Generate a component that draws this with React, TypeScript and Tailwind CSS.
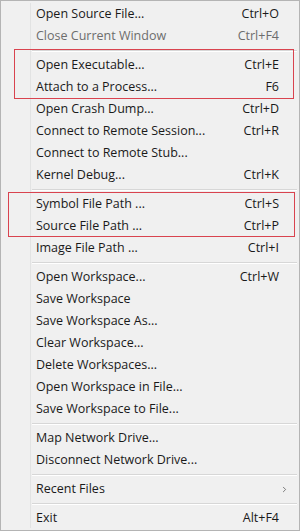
import { ChevronRight } from 'lucide-react'

type Item =
  | { kind: 'sep' }
  | { kind: 'item'; label: string; shortcut?: string; disabled?: boolean; submenu?: boolean }

const items: Item[] = [
  { kind: 'item', label: 'Open Source File...', shortcut: 'Ctrl+O' },
  { kind: 'item', label: 'Close Current Window', shortcut: 'Ctrl+F4', disabled: true },
  { kind: 'sep' },
  { kind: 'item', label: 'Open Executable...', shortcut: 'Ctrl+E' },
  { kind: 'item', label: 'Attach to a Process...', shortcut: 'F6' },
  { kind: 'item', label: 'Open Crash Dump...', shortcut: 'Ctrl+D' },
  { kind: 'item', label: 'Connect to Remote Session...', shortcut: 'Ctrl+R' },
  { kind: 'item', label: 'Connect to Remote Stub...' },
  { kind: 'item', label: 'Kernel Debug...', shortcut: 'Ctrl+K' },
  { kind: 'sep' },
  { kind: 'item', label: 'Symbol File Path ...', shortcut: 'Ctrl+S' },
  { kind: 'item', label: 'Source File Path ...', shortcut: 'Ctrl+P' },
  { kind: 'item', label: 'Image File Path ...', shortcut: 'Ctrl+I' },
  { kind: 'sep' },
  { kind: 'item', label: 'Open Workspace...', shortcut: 'Ctrl+W' },
  { kind: 'item', label: 'Save Workspace' },
  { kind: 'item', label: 'Save Workspace As...' },
  { kind: 'item', label: 'Clear Workspace...' },
  { kind: 'item', label: 'Delete Workspaces...' },
  { kind: 'item', label: 'Open Workspace in File...' },
  { kind: 'item', label: 'Save Workspace to File...' },
  { kind: 'sep' },
  { kind: 'item', label: 'Map Network Drive...' },
  { kind: 'item', label: 'Disconnect Network Drive...' },
  { kind: 'sep' },
  { kind: 'item', label: 'Recent Files', submenu: true },
  { kind: 'sep' },
  { kind: 'item', label: 'Exit', shortcut: 'Alt+F4' },
]

export default function App() {
  return (
    <div className="relative w-[301px] h-[532px] bg-white font-['Open_Sans',sans-serif] text-[12.5px]">
      <div className="relative w-[300px] h-[531px] border border-[#b4b4b4] bg-[#f0f0f0] pt-[2px] pb-[2px]">
        {/* icon gutter line */}
        <div className="absolute top-[2px] bottom-[2px] left-[29px] w-[2px] border-l border-[#e2e3e3]" />
        <div className="relative flex flex-col">
          {items.map((it, i) =>
            it.kind === 'sep' ? (
              <div key={i} className="h-[7px] flex items-center pl-[31px] pr-[2px]">
                <div className="w-full h-[2px] border-t border-[#d7d7d7] border-b border-b-white" />
              </div>
            ) : (
              <div
                key={i}
                className={`h-[22px] flex items-center pl-[35px] pr-[20px] ${
                  it.disabled ? 'text-[#6d6d6d]' : 'text-[#1a1a1a]'
                }`}
              >
                <span className="flex-1 whitespace-nowrap">{it.label}</span>
                {it.shortcut && <span className="whitespace-nowrap">{it.shortcut}</span>}
                {it.submenu && (
                  <ChevronRight className="w-[9px] h-[9px] text-[#555] -mr-[10px]" strokeWidth={2} />
                )}
              </div>
            )
          )}
        </div>
      </div>
      {/* red annotation boxes */}
      <div className="absolute left-[14px] top-[49px] w-[280px] h-[50px] border border-[#d9434f]" />
      <div className="absolute left-[8px] top-[192px] w-[287px] h-[45px] border border-[#d9434f]" />
    </div>
  )
}
